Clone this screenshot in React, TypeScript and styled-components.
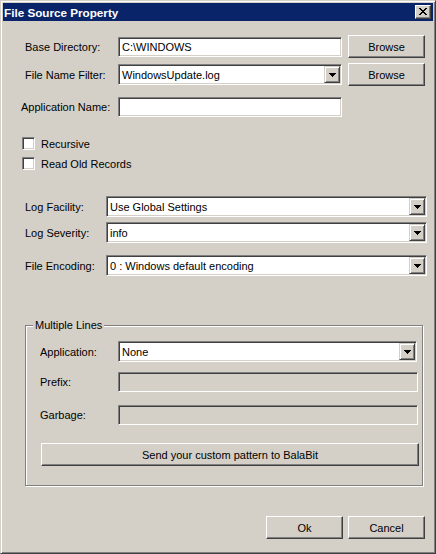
import React from 'react';
import styled, { createGlobalStyle } from 'styled-components';

const Global = createGlobalStyle`
  html, body { margin: 0; padding: 0; background: #d4d0c8; }
  body { font-family: "Liberation Sans", Arial, sans-serif; font-size: 11px; color: #000; }
  * { box-sizing: border-box; }
`;

const Window = styled.div`
  width: 436px;
  height: 554px;
  background: #d4d0c8;
  border: 1px solid;
  border-color: #d4d0c8 #404040 #404040 #d4d0c8;
  box-shadow: inset 1px 1px 0 #fff, inset -1px -1px 0 #808080;
  padding: 2px;
  display: flex;
  flex-direction: column;
`;

const TitleBar = styled.div`
  height: 18px;
  flex: none;
  background: #0a246a;
  display: flex;
  align-items: center;
  justify-content: space-between;
  padding: 0 2px 0 1px;
`;

const TitleText = styled.span`
  color: #fff;
  font-weight: bold;
  font-size: 11.7px;
  letter-spacing: 0;
`;

const CloseButton = styled.div`
  width: 16px;
  height: 14px;
  background: #d4d0c8;
  border: 1px solid;
  border-color: #fff #404040 #404040 #fff;
  box-shadow: inset -1px -1px 0 #808080;
  display: flex;
  align-items: center;
  justify-content: center;
  padding-bottom: 1px;
`;

const Body = styled.div`
  flex: 1;
  display: flex;
  flex-direction: column;
`;

const Row = styled.div<{ $top: number; $h: number; $pl?: number }>`
  display: flex;
  align-items: center;
  height: ${p => p.$h}px;
  margin-top: ${p => p.$top}px;
  padding-left: ${p => p.$pl ?? 18}px;
  flex: none;
`;

const Label = styled.span<{ $w: number; $pl?: number }>`
  width: ${p => p.$w}px;
  padding-left: ${p => p.$pl ?? 4}px;
  white-space: nowrap;
  flex: none;
`;

const sunken = `
  border: 1px solid;
  border-color: #808080 #fff #fff #808080;
  box-shadow: inset 1px 1px 0 #404040, inset -1px -1px 0 #d4d0c8;
  padding: 1px;
`;

const TextBox = styled.div<{ $w: number; $h?: number; $disabled?: boolean }>`
  ${sunken}
  width: ${p => p.$w}px;
  height: ${p => p.$h ?? 20}px;
  background: ${p => (p.$disabled ? '#d4d0c8' : '#fff')};
  display: flex;
  align-items: center;
  padding-left: 3px;
  white-space: nowrap;
  overflow: hidden;
  flex: none;
`;

const Combo = styled.div<{ $w: number }>`
  ${sunken}
  width: ${p => p.$w}px;
  height: 21px;
  background: #fff;
  display: flex;
  align-items: stretch;
  flex: none;
`;

const ComboText = styled.span`
  flex: 1;
  display: flex;
  align-items: center;
  padding-left: 2px;
  white-space: nowrap;
  overflow: hidden;
`;

const ArrowButton = styled.div`
  width: 16px;
  background: #d4d0c8;
  border: 1px solid;
  border-color: #d4d0c8 #404040 #404040 #d4d0c8;
  box-shadow: inset 1px 1px 0 #fff, inset -1px -1px 0 #808080;
  display: flex;
  align-items: center;
  justify-content: center;
  flex: none;
`;

const Button = styled.div<{ $w: number; $ml?: number }>`
  width: ${p => p.$w}px;
  height: 23px;
  margin-left: ${p => p.$ml ?? 0}px;
  background: #d4d0c8;
  border: 1px solid;
  border-color: #fff #404040 #404040 #fff;
  box-shadow: inset -1px -1px 0 #808080;
  display: flex;
  align-items: center;
  justify-content: center;
  flex: none;
  white-space: nowrap;
`;

const CheckRow = styled.div<{ $top: number }>`
  display: flex;
  align-items: center;
  gap: 6px;
  height: 13px;
  margin-top: ${p => p.$top}px;
  padding-left: 19px;
  flex: none;
`;

const CheckBox = styled.div`
  width: 13px;
  height: 13px;
  background: #fff;
  border: 1px solid;
  border-color: #808080 #fff #fff #808080;
  box-shadow: inset 1px 1px 0 #404040, inset -1px -1px 0 #d4d0c8;
  flex: none;
`;

const Group = styled.div`
  position: relative;
  margin-top: 49px;
  margin-left: 22px;
  width: 398px;
  height: 161px;
  border: 1px solid #808080;
  box-shadow: inset 1px 1px 0 #fff, 1px 1px 0 #fff;
  display: flex;
  flex-direction: column;
  flex: none;
`;

const Legend = styled.span`
  position: absolute;
  top: -7px;
  left: 7px;
  padding: 0 2px;
  background: #d4d0c8;
  line-height: 13px;
`;

const Footer = styled.div`
  display: flex;
  justify-content: flex-end;
  gap: 5px;
  margin-top: 30px;
  padding-right: 8px;
  flex: none;
`;

const XIcon = () => (
  <svg width="8" height="7" viewBox="0 0 8 7" shapeRendering="crispEdges">
    <path
      fill="#000"
      d="M0 0h2v1h-2zM6 0h2v1h-2zM1 1h2v1h-2zM5 1h2v1h-2zM2 2h4v1h-4zM3 3h2v1h-2zM2 4h4v1h-4zM1 5h2v1h-2zM5 5h2v1h-2zM0 6h2v1h-2zM6 6h2v1h-2z"
    />
  </svg>
);

const DownArrow = () => (
  <svg width="7" height="4" viewBox="0 0 7 4" shapeRendering="crispEdges">
    <path fill="#000" d="M0 0h7v1h-7zM1 1h5v1h-5zM2 2h3v1h-3zM3 3h1v1h-1z" />
  </svg>
);

const ComboBox = ({ w, value }: { w: number; value: string }) => (
  <Combo $w={w}>
    <ComboText>{value}</ComboText>
    <ArrowButton>
      <DownArrow />
    </ArrowButton>
  </Combo>
);

export default function App() {
  return (
    <>
      <Global />
      <Window>
        <TitleBar>
          <TitleText>File Source Property</TitleText>
          <CloseButton>
            <XIcon />
          </CloseButton>
        </TitleBar>
        <Body>
          <Row $top={14} $h={23}>
            <Label $w={97}>Base Directory:</Label>
            <TextBox $w={224}>C:\WINDOWS</TextBox>
            <Button $w={77} $ml={6}>Browse</Button>
          </Row>
          <Row $top={5} $h={23}>
            <Label $w={97}>File Name Filter:</Label>
            <ComboBox w={224} value="WindowsUpdate.log" />
            <Button $w={77} $ml={6}>Browse</Button>
          </Row>
          <Row $top={11} $h={20}>
            <Label $w={97} $pl={0}>Application Name:</Label>
            <TextBox $w={224} />
          </Row>

          <CheckRow $top={20}>
            <CheckBox />
            <span>Recursive</span>
          </CheckRow>
          <CheckRow $top={7}>
            <CheckBox />
            <span>Read Old Records</span>
          </CheckRow>

          <Row $top={26} $h={21}>
            <Label $w={85}>Log Facility:</Label>
            <ComboBox w={321} value="Use Global Settings" />
          </Row>
          <Row $top={5} $h={21}>
            <Label $w={85}>Log Severity:</Label>
            <ComboBox w={321} value="info" />
          </Row>
          <Row $top={12} $h={21}>
            <Label $w={85}>File Encoding:</Label>
            <ComboBox w={321} value="0 : Windows default encoding" />
          </Row>

          <Group>
            <Legend>Multiple Lines</Legend>
            <Row $top={15} $h={21} $pl={14}>
              <Label $w={78} $pl={0}>Application:</Label>
              <ComboBox w={299} value="None" />
            </Row>
            <Row $top={10} $h={20} $pl={14}>
              <Label $w={78} $pl={0}>Prefix:</Label>
              <TextBox $w={300} $disabled />
            </Row>
            <Row $top={13} $h={20} $pl={14}>
              <Label $w={78} $pl={0}>Garbage:</Label>
              <TextBox $w={300} $disabled />
            </Row>
            <Row $top={18} $h={23} $pl={15}>
              <Button $w={378}>Send your custom pattern to BalaBit</Button>
            </Row>
          </Group>

          <Footer>
            <Button $w={77}>Ok</Button>
            <Button $w={77}>Cancel</Button>
          </Footer>
        </Body>
      </Window>
    </>
  );
}
